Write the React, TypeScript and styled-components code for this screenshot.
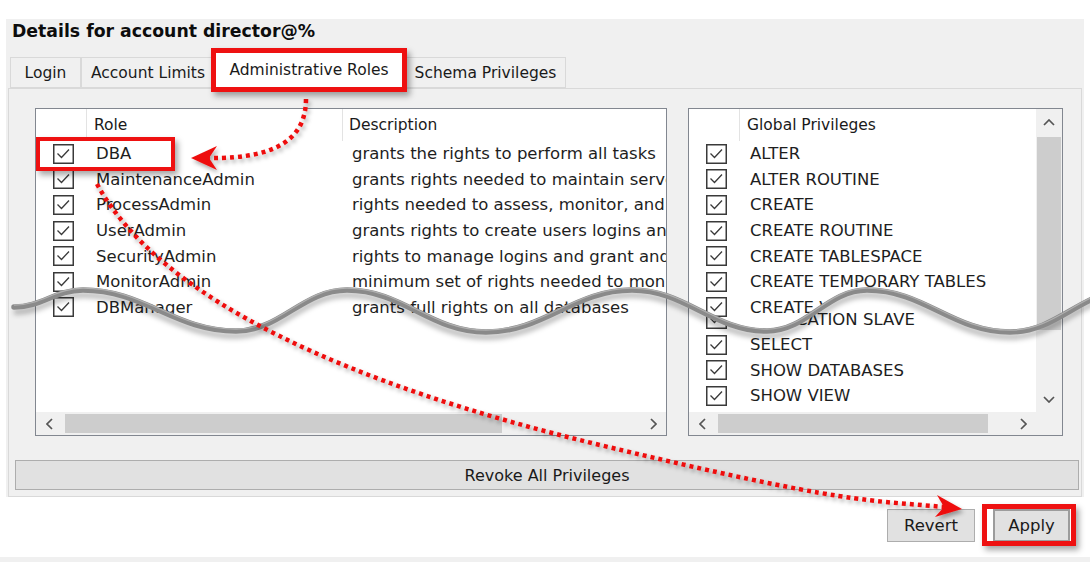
import React from 'react';
import styled, { createGlobalStyle } from 'styled-components';

const GlobalStyle = createGlobalStyle`
  html, body { margin: 0; padding: 0; background: #fff; }
  body { font-family: "DejaVu Sans", "Liberation Sans", sans-serif; color: #1e1e1e; }
`;

// torn-paper seam, page coordinates of crests / troughs
const WAVE: [number, number][] = [
    [14, 307], [83, 290], [236, 331], [347, 290], [486, 332],
    [632, 290], [767, 331], [867, 290], [1010, 332], [1130, 290]
];

function wavePath(dx = 0, dy = 0) {
    let d = `M${WAVE[0][0] + dx},${WAVE[0][1] + dy}`;
    for (let i = 1; i < WAVE.length; i++) {
        const [x0, y0] = WAVE[i - 1];
        const [x1, y1] = WAVE[i];
        const k = (x1 - x0) * 0.4;
        d += ` C${x0 + k + dx},${y0 + dy} ${x1 - k + dx},${y1 + dy} ${x1 + dx},${y1 + dy}`;
    }
    return d;
}

const RIGHT_X = 689;
const TOP_Y = 141;
const BOTTOM_Y = 306.4;
const clipAbove = `${wavePath(-RIGHT_X, -TOP_Y)} L${1130 - RIGHT_X},-600 L${14 - RIGHT_X},-600 Z`;
const clipBelow = `${wavePath(-RIGHT_X, -BOTTOM_Y)} L${1130 - RIGHT_X},600 L${14 - RIGHT_X},600 Z`;

const roles = [
    { name: 'DBA', desc: 'grants the rights to perform all tasks' },
    { name: 'MaintenanceAdmin', desc: 'grants rights needed to maintain server' },
    { name: 'ProcessAdmin', desc: 'rights needed to assess, monitor, and kill any user process' },
    { name: 'UserAdmin', desc: 'grants rights to create users logins and reset passwords' },
    { name: 'SecurityAdmin', desc: 'rights to manage logins and grant and revoke privileges' },
    { name: 'MonitorAdmin', desc: 'minimum set of rights needed to monitor server' },
    { name: 'DBManager', desc: 'grants full rights on all databases' },
];

const privilegesTop = ['ALTER', 'ALTER ROUTINE', 'CREATE', 'CREATE ROUTINE', 'CREATE TABLESPACE', 'CREATE TEMPORARY TABLES', 'CREATE VIEW'];
const privilegesBottom = ['REPLICATION SLAVE', 'SELECT', 'SHOW DATABASES', 'SHOW VIEW'];

const Page = styled.div`
  position: relative;
  width: 1090px;
  height: 562px;
  overflow: hidden;
  display: flex;
  flex-direction: column;
  background: #fff;
`;

const Window = styled.div`
  margin: 19px 6px 0 6px;
  background: #f0f0f0;
  display: flex;
  flex-direction: column;
`;

const Title = styled.div`
  height: 24px;
  line-height: 24px;
  padding-left: 6px;
  font-size: 17.3px;
  font-weight: bold;
  color: #0d0d0d;
`;

const TabBar = styled.div`
  height: 45px;
  display: flex;
  align-items: flex-end;
  padding-left: 4px;
`;

const Tab = styled.div<{ $w: number; $active?: boolean; $marked?: boolean }>`
  position: relative;
  box-sizing: border-box;
  width: ${p => p.$w}px;
  height: ${p => (p.$active ? 37 : 31)}px;
  margin: 0 0 ${p => (p.$active ? -1 : 0)}px ${p => (p.$active ? -2 : 0)}px;
  border: 1px solid #d9d9d9;
  border-bottom: ${p => (p.$active ? 'none' : '1px solid #d9d9d9')};
  background: ${p => (p.$active ? '#fff' : '#f0f0f0')};
  display: flex;
  align-items: center;
  justify-content: center;
  padding-bottom: ${p => (p.$active ? 3 : 0)}px;
  font-size: 15.5px;
  color: #1a1a1a;
  white-space: nowrap;

  ${p => p.$marked && `
    &::after {
      content: '';
      position: absolute;
      z-index: 2;
      top: -5px; left: -3px; right: -3px; bottom: -3px;
      border: 5px solid #ee1111;
      box-shadow: 3px 4px 6px rgba(0, 0, 0, 0.35);
    }
  `}
`;

const TabPane = styled.div`
  box-sizing: border-box;
  height: 409px;
  margin: 0 2px;
  border: 1px solid #d9d9d9;
  background: #f0f0f0;
  display: flex;
  flex-direction: column;
  padding: 19px 2px 6px 6px;
`;

const ListsRow = styled.div`
  height: 328px;
  margin: 0 16px 0 20px;
  display: flex;
  gap: 21px;
`;

const ListBox = styled.div<{ $w?: number; $vscroll?: boolean }>`
  box-sizing: border-box;
  ${p => (p.$w ? `width: ${p.$w}px;` : 'flex: 1;')}
  border: 1px solid #828790;
  background: #fff;
  display: grid;
  grid-template-columns: ${p => (p.$vscroll ? '1fr 26px' : '1fr')};
  grid-template-rows: 1fr 23px;
  overflow: hidden;
`;

const Content = styled.div`
  min-width: 0;
  overflow: hidden;
  display: flex;
  flex-direction: column;
`;

const HeaderRow = styled.div`
  height: 32px;
  flex: none;
  display: flex;
  font-size: 15.5px;
  color: #1a1a1a;
`;

const HeaderCell = styled.div<{ $w?: number; $pad?: number; $sep?: boolean }>`
  box-sizing: border-box;
  ${p => (p.$w ? `width: ${p.$w}px; flex: none;` : 'flex: 1;')}
  padding-left: ${p => p.$pad ?? 0}px;
  display: flex;
  align-items: center;
  border-right: ${p => (p.$sep ? '1px solid #e3e3e3' : 'none')};
  white-space: nowrap;
`;

const Rows = styled.div<{ $clip?: string; $pull?: number }>`
  flex: none;
  display: flex;
  flex-direction: column;
  margin-top: ${p => -(p.$pull ?? 0)}px;
  ${p => p.$clip && `clip-path: path('${p.$clip}');`}
`;

const Row = styled.div<{ $marked?: boolean }>`
  position: relative;
  height: 25.6px;
  display: flex;
  align-items: center;
  font-size: 16.5px;
  white-space: nowrap;

  ${p => p.$marked && `
    &::after {
      content: '';
      position: absolute;
      z-index: 2;
      left: 0; top: -4px;
      width: 139px; height: 34px;
      box-sizing: border-box;
      border: 4px solid #ee1111;
      box-shadow: 3px 4px 6px rgba(0, 0, 0, 0.35);
    }
  `}
`;

const CheckCell = styled.div`
  width: 51px;
  flex: none;
  box-sizing: border-box;
  padding-left: 17px;
  display: flex;
  align-items: center;
`;

const TextCell = styled.div<{ $w?: number; $pad: number }>`
  box-sizing: border-box;
  ${p => (p.$w ? `width: ${p.$w}px; flex: none;` : 'flex: 1; min-width: 0;')}
  padding-left: ${p => p.$pad}px;
  overflow: hidden;
`;

const HScroll = styled.div`
  background: #f0f0f0;
  display: flex;
  min-width: 0;
`;

const VScroll = styled.div`
  grid-row: 1;
  grid-column: 2;
  background: #f0f0f0;
  display: flex;
  flex-direction: column;
`;

const ArrowBtn = styled.div<{ $vertical?: boolean }>`
  flex: none;
  width: ${p => (p.$vertical ? 'auto' : '26px')};
  height: ${p => (p.$vertical ? '26px' : 'auto')};
  display: flex;
  align-items: center;
  justify-content: center;
`;

const Track = styled.div<{ $vertical?: boolean }>`
  flex: 1;
  display: flex;
  flex-direction: ${p => (p.$vertical ? 'column' : 'row')};
  padding: ${p => (p.$vertical ? '0 1px' : '2px 0')};
`;

const Thumb = styled.div<{ $offset: number; $len: number; $vertical?: boolean }>`
  flex: none;
  background: #cdcdcd;
  ${p => (p.$vertical
        ? `margin-top: ${p.$offset}px; height: ${p.$len}px;`
        : `margin-left: ${p.$offset}px; width: ${p.$len}px;`)}
`;

const Corner = styled.div`
  background: #f0f0f0;
`;

const RevokeButton = styled.div`
  box-sizing: border-box;
  height: 30px;
  margin-top: 24px;
  border: 1px solid #adadad;
  background: #e1e1e1;
  display: flex;
  align-items: center;
  justify-content: center;
  font-size: 16px;
  color: #1a1a1a;
`;

const Footer = styled.div`
  height: 60px;
  box-sizing: border-box;
  padding: 12px 20px 0 0;
  display: flex;
  justify-content: flex-end;
  align-items: flex-start;
  gap: 18px;
`;

const Button = styled.div<{ $w: number; $default?: boolean; $marked?: boolean }>`
  position: relative;
  box-sizing: border-box;
  width: ${p => p.$w}px;
  height: 33px;
  border: ${p => (p.$default ? '2px solid #9c9c9c' : '1px solid #adadad')};
  background: #e1e1e1;
  display: flex;
  align-items: center;
  justify-content: center;
  font-size: 16.5px;
  color: #1a1a1a;

  ${p => p.$marked && `
    &::after {
      content: '';
      position: absolute;
      z-index: 2;
      top: -7px; left: -13px; right: -8px; bottom: -6px;
      border: 5px solid #ee1111;
      box-shadow: 3px 4px 6px rgba(0, 0, 0, 0.35);
    }
  `}
`;

const BottomStrip = styled.div`
  height: 5px;
  background: #f0f0f0;
`;

const Overlay = styled.svg`
  position: absolute;
  left: 0;
  top: 0;
  pointer-events: none;
`;

function CheckBox() {
    return (
        <svg width="21" height="20" viewBox="0 0 21 20">
            <rect x="0.75" y="0.75" width="19.5" height="18.5" fill="#fff" stroke="#3a3a3a" strokeWidth="1.5" />
            <polyline points="4.5,9.5 8.5,13.5 16,5.5" fill="none" stroke="#3a3a3a" strokeWidth="1.3" />
        </svg>
    );
}

function Chevron({ dir }: { dir: 'left' | 'right' | 'up' | 'down' }) {
    const pts = {
        left: '6,1 1,6 6,11',
        right: '1,1 6,6 1,11',
        up: '1,6 6,1 11,6',
        down: '1,1 6,6 11,1',
    }[dir];
    const vertical = dir === 'up' || dir === 'down';
    return (
        <svg width={vertical ? 12 : 7} height={vertical ? 7 : 12} viewBox={vertical ? '0 0 12 7' : '0 0 7 12'}>
            <polyline points={pts} fill="none" stroke="#555" strokeWidth="1.7" />
        </svg>
    );
}

function HorizontalBar({ offset, len }: { offset: number; len: number }) {
    return (
        <HScroll>
            <ArrowBtn><Chevron dir="left" /></ArrowBtn>
            <Track><Thumb $offset={offset} $len={len} /></Track>
            <ArrowBtn><Chevron dir="right" /></ArrowBtn>
        </HScroll>
    );
}

function RolesList() {
    return (
        <ListBox $w={632}>
            <Content>
                <HeaderRow>
                    <HeaderCell $w={51} $sep />
                    <HeaderCell $w={256} $pad={7} $sep>Role</HeaderCell>
                    <HeaderCell $pad={6}>Description</HeaderCell>
                </HeaderRow>
                <Rows>
                    {roles.map((r, i) => (
                        <Row key={r.name} $marked={i === 0}>
                            <CheckCell><CheckBox /></CheckCell>
                            <TextCell $w={256} $pad={9}>{r.name}</TextCell>
                            <TextCell $pad={9}>{r.desc}</TextCell>
                        </Row>
                    ))}
                </Rows>
            </Content>
            <HorizontalBar offset={3} len={437} />
        </ListBox>
    );
}

function PrivilegesList() {
    return (
        <ListBox $vscroll>
            <Content>
                <HeaderRow>
                    <HeaderCell $w={51} $sep />
                    <HeaderCell $pad={7}>Global Privileges</HeaderCell>
                </HeaderRow>
                <Rows $clip={clipAbove}>
                    {privilegesTop.map(p => (
                        <Row key={p}>
                            <CheckCell><CheckBox /></CheckCell>
                            <TextCell $pad={10}>{p}</TextCell>
                        </Row>
                    ))}
                </Rows>
                <Rows $clip={clipBelow} $pull={13.8}>
                    {privilegesBottom.map(p => (
                        <Row key={p}>
                            <CheckCell><CheckBox /></CheckCell>
                            <TextCell $pad={10}>{p}</TextCell>
                        </Row>
                    ))}
                </Rows>
            </Content>
            <VScroll>
                <ArrowBtn $vertical><Chevron dir="up" /></ArrowBtn>
                <Track $vertical><Thumb $vertical $offset={2} $len={193} /></Track>
                <ArrowBtn $vertical><Chevron dir="down" /></ArrowBtn>
            </VScroll>
            <HorizontalBar offset={3} len={270} />
            <Corner />
        </ListBox>
    );
}

function Annotations() {
    const red = '#ee1111';
    return (
        <Overlay width="1090" height="562" viewBox="0 0 1090 562">
            <defs>
                <filter id="soft" x="-10%" y="-50%" width="120%" height="200%">
                    <feGaussianBlur stdDeviation="2.5" />
                </filter>
                <filter id="shadow" x="-10%" y="-10%" width="120%" height="130%">
                    <feDropShadow dx="2" dy="3" stdDeviation="2" floodColor="#000" floodOpacity="0.35" />
                </filter>
            </defs>

            <path d={wavePath(0, 5)} fill="none" stroke="rgba(0,0,0,0.25)" strokeWidth="6" filter="url(#soft)" />
            <path d={wavePath()} fill="none" stroke="#8a8a8a" strokeWidth="5.5" strokeLinecap="round" />
            <path d={wavePath(0, -1.8)} fill="none" stroke="#b0b0b0" strokeWidth="1.2" />

            <g filter="url(#shadow)">
                <path d="M306,99 C306,135 282,159 209,158" fill="none" stroke={red} strokeWidth="4.5" strokeDasharray="4 4" />
                <polygon points="191,158 217,146 209,158 217,170" fill={red} />

                <path d="M97,184 C160,300 350,385 600,445 S870,500 944,507" fill="none" stroke={red} strokeWidth="4.5" strokeDasharray="4 4" />
                <polygon points="962,509 937,495 944,507 935,517" fill={red} />
            </g>
        </Overlay>
    );
}

export default function App() {
    return (
        <>
            <GlobalStyle />
            <Page>
                <Window>
                    <Title>Details for account director@%</Title>
                    <TabBar>
                        <Tab $w={71}>Login</Tab>
                        <Tab $w={134}>Account Limits</Tab>
                        <Tab $w={192} $active $marked>Administrative Roles</Tab>
                        <Tab $w={161}>Schema Privileges</Tab>
                    </TabBar>
                    <TabPane>
                        <ListsRow>
                            <RolesList />
                            <PrivilegesList />
                        </ListsRow>
                        <RevokeButton>Revoke All Privileges</RevokeButton>
                    </TabPane>
                </Window>
                <Footer>
                    <Button $w={88}>Revert</Button>
                    <Button $w={77} $default $marked>Apply</Button>
                </Footer>
                <BottomStrip />
                <Annotations />
            </Page>
        </>
    );
}
